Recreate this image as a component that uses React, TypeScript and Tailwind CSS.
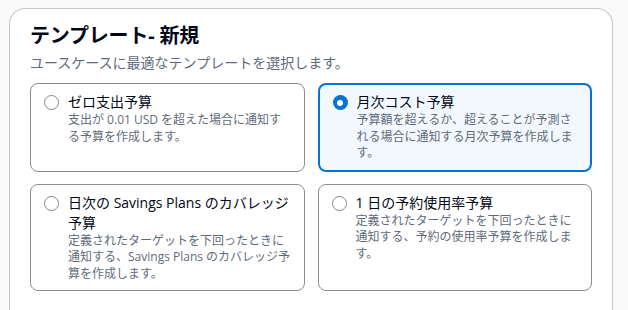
import React from 'react';

const templates = [
  {
    id: 'zero',
    title: 'ゼロ支出予算',
    description: '支出が 0.01 USD を超えた場合に通知する予算を作成します。',
  },
  {
    id: 'monthly',
    title: '月次コスト予算',
    description: '予算額を超えるか、超えることが予測される場合に通知する月次予算を作成します。',
  },
  {
    id: 'savings',
    title: '日次の Savings Plans のカバレッジ予算',
    description: '定義されたターゲットを下回ったときに通知する、Savings Plans のカバレッジ予算を作成します。',
  },
  {
    id: 'ri',
    title: '1 日の予約使用率予算',
    description: '定義されたターゲットを下回ったときに通知する、予約の使用率予算を作成します。',
  },
];

export default function App() {
  const [selected, setSelected] = React.useState('monthly');

  return (
    <div className="min-h-screen bg-[#fafafa] pt-2 pl-[9px] pr-[15px] font-['Open_Sans','Noto_Sans_CJK_JP',sans-serif] text-[#000716]">
      <div className="rounded-t-2xl border border-b-0 border-[#c6c6cd] bg-white px-5 pt-[15px] pb-5 h-[310px]">
        <h2 className="text-[20px] font-bold leading-6 tracking-[-0.2px]">テンプレート- 新規</h2>
        <p className="mt-[5px] text-[14px] leading-5 text-[#5f6b7a]">ユースケースに最適なテンプレートを選択します。</p>

        <div className="mt-[10px] grid grid-cols-2 gap-x-[13px] gap-y-[12px]">
          {templates.map((tpl) => {
            const isOn = selected === tpl.id;
            return (
              <label
                key={tpl.id}
                onClick={() => setSelected(tpl.id)}
                className={`flex cursor-pointer gap-[9px] rounded-lg pl-[13px] pr-[13px] pt-2 pb-2 ${
                  isOn
                    ? 'border-2 border-[#0972d3] bg-[#f2f8fd] pl-[12px] pr-[12px] pt-[7px]'
                    : 'border border-[#8c8c94] bg-white'
                }`}
              >
                <span className="mt-[3px] shrink-0">
                  {isOn ? (
                    <span className="flex h-[15px] w-[15px] items-center justify-center rounded-full bg-[#0972d3]">
                      <span className="h-[6px] w-[6px] rounded-full bg-white" />
                    </span>
                  ) : (
                    <span className="block h-[15px] w-[15px] rounded-full border-[1.5px] border-[#7d8998] bg-white" />
                  )}
                </span>
                <span className="flex flex-col">
                  <span className="text-[14px] leading-5">{tpl.title}</span>
                  <span className="text-[12px] leading-[16.5px] text-[#5f6b7a]">{tpl.description}</span>
                </span>
              </label>
            );
          })}
        </div>
      </div>
    </div>
  );
}
